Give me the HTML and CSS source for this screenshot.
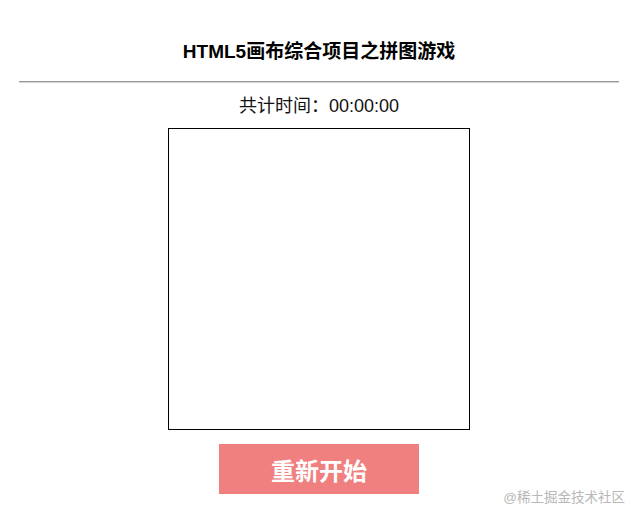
FILE: index.html
```html
<!DOCTYPE html>
<html lang="zh-CN">
<head>
<meta charset="utf-8">
<title>HTML5画布综合项目之拼图游戏</title>
<link rel="stylesheet" href="styles.css">
</head>
<body>
<div class="page">
  <h1 class="title">HTML5画布综合项目之拼图游戏</h1>
  <div class="rule"></div>
  <div class="timer">共计时间：<span>00:00:00</span></div>
  <div class="board"></div>
  <button class="restart">重新开始</button>
</div>
<div class="watermark">@稀土掘金技术社区</div>
</body>
</html>
```
FILE: styles.css
```css
html, body {
  margin: 0;
  padding: 0;
  background: #fff;
}
body {
  font-family: "Liberation Sans", "Noto Sans CJK SC", sans-serif;
  color: #000;
  position: relative;
  height: 522px;
  overflow: hidden;
}
.page {
  width: 600px;
  margin: 0 auto;
  display: flex;
  flex-direction: column;
  align-items: center;
}
.title {
  margin: 40px 0 0;
  font-size: 19px;
  line-height: 24px;
  font-weight: bold;
}
.rule {
  align-self: stretch;
  margin-top: 17px;
  height: 0;
  border-top: 1px solid #9a9a9a;
  border-bottom: 1px solid #d6d6d6;
}
.timer {
  margin-top: 11px;
  font-size: 18px;
  line-height: 24px;
  color: #111;
}
.board {
  margin-top: 10px;
  width: 300px;
  height: 300px;
  border: 1px solid #000;
  background: #fff;
}
.restart {
  margin-top: 14px;
  width: 200px;
  height: 50px;
  border: none;
  padding: 0;
  background: #f08080;
  color: #fff;
  font-family: "Liberation Sans", "Noto Sans CJK SC", sans-serif;
  font-size: 24px;
  font-weight: bold;
  cursor: pointer;
}
.watermark {
  position: absolute;
  right: 13px;
  top: 490px;
  font-size: 13.5px;
  line-height: 16px;
  color: #b8b8b8;
}
```
